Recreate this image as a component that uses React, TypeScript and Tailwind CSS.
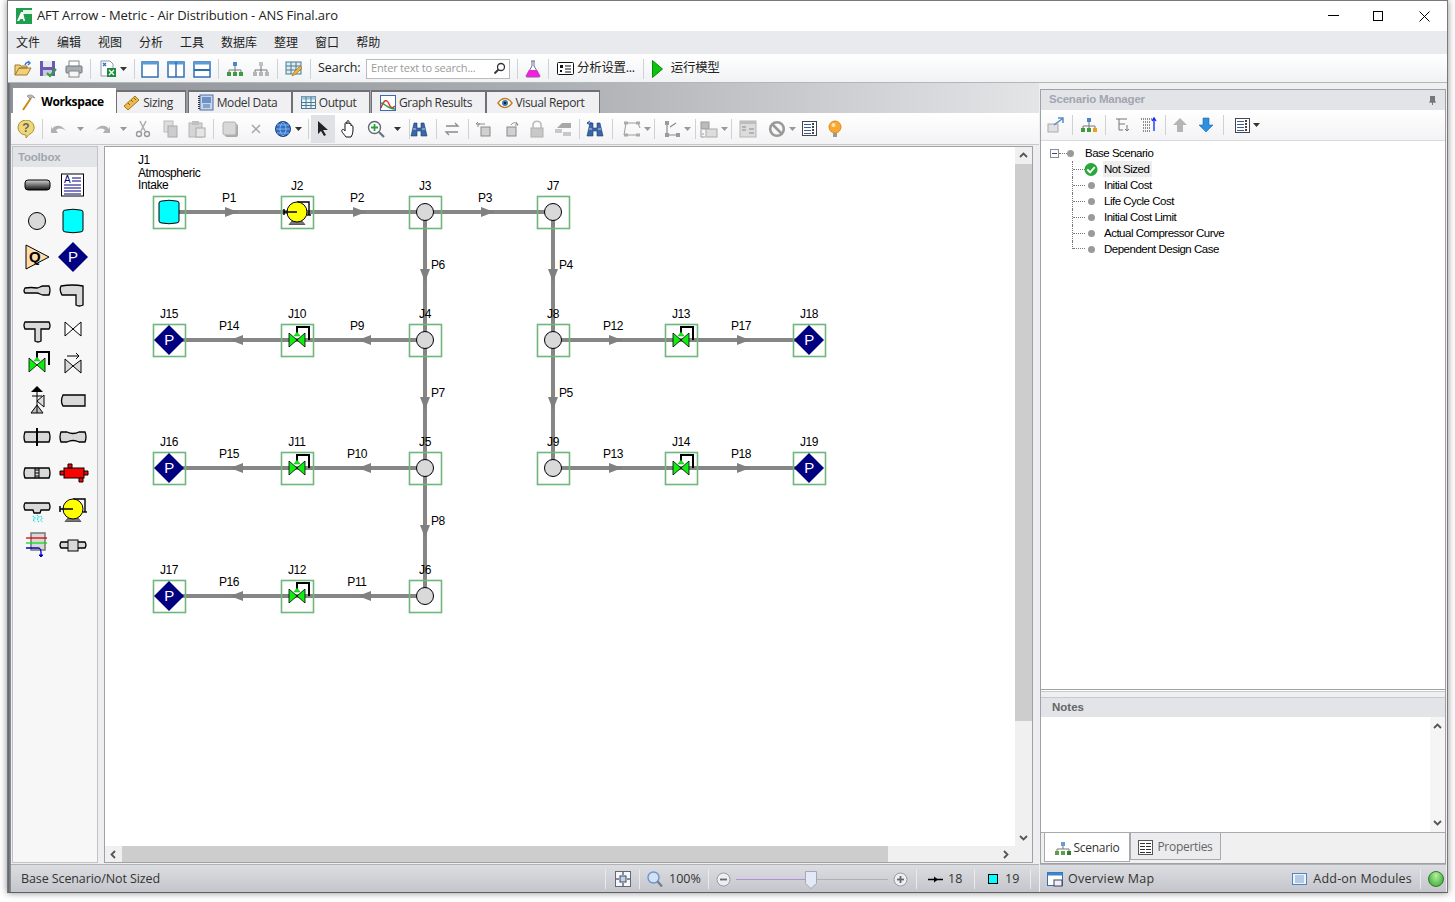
import type { ReactNode } from 'react';

const ui = "font-['Open_Sans','Noto_Sans_CJK_SC',sans-serif]";
const arial = "font-['Liberation_Sans',sans-serif]";

const S = ({ w = 18, h = 18, children }: { w?: number; h?: number; children: ReactNode }) => (
  <svg width={w} height={h} viewBox={`0 0 ${w} ${h}`} className="shrink-0">
    {children}
  </svg>
);

const Sep = ({ c = 'mx-[4px]' }: { c?: string }) => <div className={`w-px h-[20px] bg-[#d0d1d4] shrink-0 ${c}`} />;

const Caret = () => (
  <svg width="7" height="4" viewBox="0 0 7 4" className="shrink-0">
    <path d="M0 0h7L3.5 4z" fill="#333" />
  </svg>
);
const GrayCaret = () => (
  <svg width="7" height="4" viewBox="0 0 7 4" className="shrink-0">
    <path d="M0 0h7L3.5 4z" fill="#999" />
  </svg>
);

const Slot = ({ w, children }: { w: string; children: ReactNode }) => (
  <div className={`${w} h-full flex items-center justify-center gap-[3px] shrink-0`}>{children}</div>
);

/* ---------- small toolbar icons ---------- */
const Layout = ({ kind }: { kind: 'one' | 'cols' | 'rows' }) => (
  <S>
    <rect x="1" y="2" width="16" height="15" fill="#fff" stroke="#2f6fb5" strokeWidth="1.5" />
    <rect x="1" y="2" width="16" height="2.5" fill="#5b9bd8" />
    {kind === 'cols' && <path d="M9 2v15" stroke="#2f6fb5" strokeWidth="1.5" />}
    {kind === 'rows' && <path d="M1 10h16" stroke="#2f6fb5" strokeWidth="2" />}
  </S>
);

const Tree = ({ gray, badge }: { gray?: boolean; badge?: boolean }) => {
  const a = gray ? '#b5b5b5' : '#3f9a3f';
  const b = gray ? '#c0c0c0' : '#4a86c8';
  return (
    <S>
      <rect x="7" y="2" width="4" height="4" fill={b} />
      <path d="M9 6v4M3 12v-2h12v2M9 10v2" stroke="#777" fill="none" />
      <rect x="1" y="12" width="4" height="4" fill={a} />
      <rect x="7" y="12" width="4" height="4" fill={a} />
      <rect x="13" y="12" width="4" height="4" fill={badge ? '#e8a020' : a} />
    </S>
  );
};

const GrayBox = ({ arrow }: { arrow?: 'l' | 'r' }) => (
  <S>
    <rect x="5" y="7" width="9" height="9" fill="#d0d0d0" stroke="#8a8a8a" />
    {arrow === 'l' && <path d="M9 4H2v3M2 2 0 4h4" fill="none" stroke="#8a8a8a" />}
    {arrow === 'r' && <path d="M9 5c2-3 5-3 7 0M14 2l2 3h-3" fill="none" stroke="#8a8a8a" />}
  </S>
);

const Binoculars = ({ small }: { small?: boolean }) => (
  <S>
    <path d="M4 3h3v5h4V3h3l3 13h-6v-5H7v5H1z" fill="#3b66a8" stroke="#1d3c70" strokeWidth=".6" />
    <path d="M3 9h3M12 9h3" stroke="#bcd0ee" />
    {small && <path d="M1 3h5M1 3l3-2M1 3l3 2" stroke="#1d4fa8" fill="none" />}
  </S>
);

const MainToolbar = () => (
  <div className={`h-[29px] pt-[1px] flex items-center pl-[3px] bg-linear-to-b from-white to-[#f1f2f4] border-b border-[#b4b6ba] text-[12.5px] text-[#222] ${ui}`}>
    <Slot w="w-[24px]">
      <S>
        <path d="M1 15V5h5l1 1h6v2H5L1 15h12l4-7H5" fill="#f2cf7a" stroke="#9c7a2a" />
        <path d="M11 5c1-3 3-3 5-2M14 1l2 2-2 2" fill="none" stroke="#3d78c8" strokeWidth="1.4" />
      </S>
    </Slot>
    <Slot w="w-[26px]">
      <S>
        <rect x="1" y="1" width="15" height="15" fill="#6a5bb0" />
        <rect x="4" y="1" width="9" height="6" fill="#e8e8f0" />
        <rect x="4" y="10" width="9" height="6" fill="#c8c8e0" />
        <path d="M8 13l3 3 6-7" fill="none" stroke="#2e9e3a" strokeWidth="2" />
      </S>
    </Slot>
    <Slot w="w-[26px]">
      <S>
        <rect x="4" y="1" width="10" height="6" fill="#fff" stroke="#888" />
        <rect x="1" y="6" width="16" height="7" rx="1" fill="#a9adb5" stroke="#6f737a" />
        <rect x="4" y="11" width="10" height="6" fill="#f5f5f5" stroke="#888" />
      </S>
    </Slot>
    <Sep c="mx-[3px]" />
    <Slot w="w-[38px]">
      <S>
        <path d="M2 1h9l3 3v12H2z" fill="#fff" stroke="#8a9ab0" />
        <path d="M4 3l3 3M7 3 4 6" stroke="#2d6fc0" strokeWidth="1.3" />
        <rect x="8" y="8" width="9" height="9" fill="#1f8a3f" />
        <path d="M10 10l5 5M15 10l-5 5" stroke="#fff" strokeWidth="1.3" />
      </S>
      <Caret />
    </Slot>
    <Sep c="mx-[2px]" />
    <Slot w="w-[26px]"><Layout kind="one" /></Slot>
    <Slot w="w-[26px]"><Layout kind="cols" /></Slot>
    <Slot w="w-[26px]"><Layout kind="rows" /></Slot>
    <Sep c="mx-[3px]" />
    <Slot w="w-[26px]"><Tree /></Slot>
    <Slot w="w-[26px]"><Tree gray /></Slot>
    <Sep c="mx-[3px]" />
    <Slot w="w-[26px]">
      <S>
        <rect x="1" y="2" width="15" height="12" fill="#dfeaf2" stroke="#4a7a90" />
        <path d="M1 6h15M1 10h15M6 2v12M11 2v12" stroke="#4a7a90" />
        <path d="M7 16l2-4 6-6 2 2-6 6z" fill="#f0b040" stroke="#a06a10" strokeWidth=".6" />
      </S>
    </Slot>
    <Sep c="mx-[3px]" />
    <span className="ml-[4px] w-[43px] whitespace-nowrap text-[#222] tracking-[-0.05px]">Search:</span>
    <div className="ml-[5px] w-[144px] h-[20px] bg-white border border-[#b9bbc0] flex items-center pl-[4px] pr-[3px] justify-between text-[11px] tracking-[-0.2px] text-[#9a9a9a]">
      <span>Enter text to search...</span>
      <svg width="13" height="13" viewBox="0 0 13 13">
        <circle cx="8" cy="5" r="3.5" fill="none" stroke="#333" strokeWidth="1.3" />
        <path d="M5.5 7.5 1.5 11.5" stroke="#333" strokeWidth="1.8" />
      </svg>
    </div>
    <Sep c="ml-[7px] mr-[4px]" />
    <Slot w="w-[22px]">
      <S>
        <path d="M7 1h4M8 1v5l-6 10a1 1 0 0 0 1 1h12a1 1 0 0 0 1-1L10 6V1" fill="#fff" stroke="#6a6f90" />
        <path d="M5 10h8l3 6a1 1 0 0 1-1 1H3a1 1 0 0 1-1-1z" fill="#ee22dd" />
      </S>
    </Slot>
    <Sep c="ml-[4px] mr-[7px]" />
    <Slot w="w-[18px]">
      <S w={17} h={13}>
        <rect x=".5" y=".5" width="16" height="12" rx="1" fill="#fff" stroke="#111" />
        <rect x="3" y="3" width="3" height="3" fill="#111" />
        <rect x="3" y="8" width="2" height="2" fill="#111" />
        <path d="M8 4h6M8 7h6M8 10h6" stroke="#111" />
      </S>
    </Slot>
    <span className="ml-[3px] tracking-[-0.3px]">分析设置...</span>
    <Sep c="ml-[8px] mr-[6px]" />
    <Slot w="w-[16px]">
      <svg width="11" height="18" viewBox="0 0 11 18">
        <path d="M.5.5 10.5 9 .5 17.5z" fill="#0cc40c" stroke="#0a8a0a" />
      </svg>
    </Slot>
    <span className="ml-[5px] tracking-[-0.3px]">运行模型</span>
    <div className="flex-1" />
  </div>
);

/* ---------- workspace tabs ---------- */
const TabIcon = ({ name }: { name: string }) => {
  if (name === 'Workspace')
    return (
      <S>
        <path d="M3 17 11 5" stroke="#c98a1c" strokeWidth="2" />
        <path d="M7 3c3-2 6-1 8 2l-3-1-2 2z" fill="#b9b9b9" stroke="#777" strokeWidth=".6" />
      </S>
    );
  if (name === 'Sizing')
    return (
      <S w={16} h={16}>
        <path d="M0 11 11 1l4 4L4 15z" fill="#e8bb4c" stroke="#a47a18" />
        <path d="M4 8l2 2M7 5l2 2M10 3l2 2" stroke="#8a6410" />
      </S>
    );
  if (name === 'Model Data')
    return (
      <S w={16} h={17}>
        <rect x="2" y="1" width="13" height="15" fill="#c6d6ec" stroke="#4e6fa5" />
        <rect x="4" y="3" width="9" height="6" fill="#6f8fc8" />
        <path d="M5 11h7M5 13h7" stroke="#4e6fa5" />
        <path d="M1 2v13" stroke="#333" strokeDasharray="1 1" strokeWidth="2" />
      </S>
    );
  if (name === 'Output')
    return (
      <S w={15} h={13}>
        <rect x=".5" y=".5" width="14" height="12" fill="#eaf3f8" stroke="#4a7a90" />
        <rect x=".5" y=".5" width="14" height="3" fill="#9dc0d4" />
        <path d="M1 6.500h13M1 9.500h13M5 1v11M10 1v11" stroke="#4a7a90" />
      </S>
    );
  if (name === 'Graph Results')
    return (
      <S w={16} h={16}>
        <rect x=".5" y=".5" width="15" height="15" fill="#fff" stroke="#3a6bb0" />
        <path d="M1 13c3-9 6-9 8-4s4 4 6 2" fill="none" stroke="#e03030" strokeWidth="1.4" />
        <path d="M1 8c4 0 6 6 14 6" fill="none" stroke="#30a040" strokeWidth="1.4" />
      </S>
    );
  return (
    <S w={16} h={12}>
      <path d="M1 6c4-6 10-6 14 0-4 6-10 6-14 0z" fill="#fff" stroke="#c08020" strokeWidth="1.4" />
      <circle cx="8" cy="6" r="3" fill="#3a7ab8" />
      <circle cx="8" cy="6" r="1.2" fill="#123" />
    </S>
  );
};

const tabs = [
  { label: 'Workspace', w: 'w-[103px]', c: 'ml-0' },
  { label: 'Sizing', w: 'w-[70px]', c: 'ml-0' },
  { label: 'Model Data', w: 'w-[104px]', c: 'ml-[2px]' },
  { label: 'Output', w: 'w-[78px]', c: 'ml-0' },
  { label: 'Graph Results', w: 'w-[115px]', c: 'ml-[1px]' },
  { label: 'Visual Report', w: 'w-[114px]', c: 'ml-0' },
];

const Tabs = () => (
  <div className={`h-[30px] pt-[6px] flex items-end pl-[2px] bg-linear-to-r from-[#8f9397] via-[#a9acb0] to-[#e4e5e7] text-[12px] ${ui}`}>
    {tabs.map((t, i) => (
      <div
        key={t.label}
        className={`${t.w} ${t.c} flex items-center justify-center gap-[3px] pr-[5px] border-t-2 border-x ${
          i === 0
            ? 'h-[25px] bg-white border-white font-bold text-black'
            : 'h-[23px] bg-[#f0f0f2] border-[#6e7073] text-[#333]'
        }`}
      >
        <TabIcon name={t.label} />
        <span className="tracking-[-0.4px]">{t.label}</span>
      </div>
    ))}
  </div>
);

/* ---------- workspace toolbar ---------- */
const WorkToolbar = () => (
  <div className="h-[32px] flex items-center pl-[3px] bg-linear-to-b from-white to-[#f3f3f5] border-b border-[#c8c9cc]">
    <Slot w="w-[24px]">
      <S>
        <path d="M9 0a8 7.500 0 0 1 3 14.500L9 18v-3A8 7.500 0 0 1 9 0z" fill="#f0d878" stroke="#a89030" />
        <text x="9" y="12" textAnchor="middle" fontSize="12" fontWeight="700" fill="#666" fontFamily="Liberation Sans">?</text>
      </S>
    </Slot>
    <Sep />
    <Slot w="w-[24px]">
      <S>
        <path d="M2 9c4-5 10-4 14 2-4-3-7-3-10-1l2 3H1V6z" fill="#b0b0b0" />
      </S>
    </Slot>
    <Slot w="w-[18px]"><GrayCaret /></Slot>
    <Slot w="w-[26px]">
      <S>
        <path d="M16 9C12 4 6 5 2 11c4-3 7-3 10-1l-2 3h7V6z" fill="#b0b0b0" />
      </S>
    </Slot>
    <Slot w="w-[16px]"><GrayCaret /></Slot>
    <Slot w="w-[24px]">
      <S>
        <path d="M6 1l5 10M12 1 7 11" stroke="#b0b0b0" strokeWidth="1.6" />
        <circle cx="5" cy="14" r="2.500" fill="none" stroke="#999" strokeWidth="1.4" />
        <circle cx="13" cy="14" r="2.500" fill="none" stroke="#999" strokeWidth="1.4" />
      </S>
    </Slot>
    <Slot w="w-[30px]">
      <S>
        <rect x="3" y="1" width="9" height="11" fill="#ddd" stroke="#bbb" />
        <rect x="7" y="6" width="9" height="11" fill="#ccc" stroke="#aaa" />
      </S>
    </Slot>
    <Slot w="w-[24px]">
      <S>
        <rect x="1" y="3" width="13" height="14" fill="#d5d5d5" stroke="#b5b5b5" />
        <rect x="4" y="1" width="7" height="4" fill="#c0c0c0" />
        <rect x="8" y="8" width="9" height="9" fill="#e5e5e5" stroke="#aaa" />
      </S>
    </Slot>
    <Sep />
    <Slot w="w-[24px]">
      <S>
        <rect x="4" y="4" width="13" height="13" rx="2" fill="#aaa" />
        <rect x="2" y="2" width="13" height="13" rx="2" fill="#d8d8d8" stroke="#b0b0b0" />
      </S>
    </Slot>
    <Slot w="w-[28px]">
      <S>
        <path d="M5 5l8 8M13 5l-8 8" stroke="#a5a5a5" strokeWidth="1.500" />
      </S>
    </Slot>
    <Slot w="w-[36px]">
      <S>
        <circle cx="9" cy="9" r="7.500" fill="#2f6fc4" stroke="#1c3f80" />
        <path d="M2 9h14M9 2c-4 4-4 10 0 14M9 2c4 4 4 10 0 14M3 5h12M3 13h12" stroke="#a8c8ee" strokeWidth=".7" fill="none" />
      </S>
      <Caret />
    </Slot>
    <Sep c="mx-[2px]" />
    <div className="w-[24px] h-[28px] flex items-center justify-center bg-[#e0e1e5] shrink-0">
      <S w={12} h={17}>
        <path d="M1 1v13l3-3 3 5 2-1-3-5h5z" fill="#222" />
      </S>
    </div>
    <Slot w="w-[28px]">
      <S>
        <path d="M6 17c-2-3-5-5-4-7s3 1 3 1V4c0-2 2-2 2 0V2c0-2 2-2 2 0v2c0-1 2-1 2 0v2c0-1 2-1 2 1 0 4 0 7-2 10z" fill="#fff" stroke="#111" />
      </S>
    </Slot>
    <Slot w="w-[26px]">
      <S>
        <circle cx="7.500" cy="7.500" r="6" fill="#fff" stroke="#5f6a75" strokeWidth="1.4" />
        <path d="M4 7.500h7M7.500 4v7" stroke="#2f9e3a" strokeWidth="1.800" />
        <path d="M12 12l5 5" stroke="#6a7380" strokeWidth="2.200" />
      </S>
    </Slot>
    <Slot w="w-[16px]"><Caret /></Slot>
    <Sep c="ml-[4px]" />
    <Slot w="w-[18px]"><Binoculars /></Slot>
    <Sep c="ml-[8px] mr-[6px]" />
    <Slot w="w-[18px]">
      <S>
        <path d="M3 6h12l-3-3M15 12H3l3 3" fill="none" stroke="#8a8a8a" strokeWidth="1.300" />
      </S>
    </Slot>
    <Sep c="ml-[7px] mr-[3px]" />
    <Slot w="w-[26px]"><GrayBox arrow="l" /></Slot>
    <Slot w="w-[26px]"><GrayBox arrow="r" /></Slot>
    <Slot w="w-[26px]">
      <S>
        <path d="M5 8V5c0-5 8-5 8 0v3" fill="none" stroke="#bcbcbc" strokeWidth="1.600" />
        <rect x="3" y="8" width="12" height="9" fill="#c8c8c8" stroke="#b0b0b0" />
      </S>
    </Slot>
    <Slot w="w-[26px]">
      <S>
        <path d="M3 8l5-5h9v5z" fill="#a8a8a8" />
        <rect x="1" y="9" width="7" height="4" fill="#c8c8c8" />
        <rect x="9" y="12" width="8" height="4" fill="#c8c8c8" />
      </S>
    </Slot>
    <Sep c="ml-[3px] mr-[5px]" />
    <Slot w="w-[20px]"><Binoculars small /></Slot>
    <Sep c="ml-[7px] mr-[7px]" />
    <Slot w="w-[34px]">
      <S>
        <path d="M3 3h12M3 15h12M3 3 1 15M15 3l2 5" fill="none" stroke="#9c9c9c" />
        <rect x="1" y="1.500" width="4" height="3" fill="#aaa" />
        <rect x="13" y="1.500" width="4" height="3" fill="#aaa" />
        <rect x="1" y="13.500" width="4" height="3" fill="#aaa" />
        <rect x="13" y="13.500" width="4" height="3" fill="#aaa" />
      </S>
      <GrayCaret />
    </Slot>
    <Sep c="mr-[7px]" />
    <Slot w="w-[30px]">
      <S>
        <path d="M4 3v12h12M7 7l6-4" fill="none" stroke="#8a8a8a" strokeWidth="1.200" />
        <rect x="2" y="13" width="4" height="4" fill="#9a9a9a" />
        <rect x="13" y="13" width="4" height="4" fill="#9a9a9a" />
        <rect x="2" y="1" width="4" height="4" fill="#9a9a9a" />
      </S>
      <GrayCaret />
    </Slot>
    <Sep c="mx-[3px]" />
    <Slot w="w-[30px]">
      <S>
        <rect x="1" y="2" width="8" height="7" fill="#bbb" stroke="#999" />
        <rect x="6" y="9" width="11" height="8" fill="#ddd" stroke="#aaa" />
        <path d="M1 10v7h4M2 14h2" stroke="#999" fill="none" />
      </S>
      <GrayCaret />
    </Slot>
    <Sep c="ml-[2px] mr-[4px]" />
    <Slot w="w-[24px]">
      <S>
        <rect x="1" y="1" width="16" height="16" fill="#dcdcdc" stroke="#b5b5b5" />
        <rect x="1" y="1" width="16" height="3" fill="#bdbdbd" />
        <path d="M3 7h4M3 10h4M10 9h5M10 13h5" stroke="#a5a5a5" strokeWidth="1.500" />
      </S>
    </Slot>
    <div className="w-[8px] shrink-0" />
    <Slot w="w-[28px]">
      <S>
        <circle cx="9" cy="9" r="6.800" fill="none" stroke="#999" strokeWidth="2.600" />
        <path d="M4.500 4.500l9 9" stroke="#999" strokeWidth="2.600" />
      </S>
      <GrayCaret />
    </Slot>
    <Slot w="w-[26px]">
      <S w={15} h={15}>
        <rect x=".5" y=".5" width="14" height="14" fill="#fff" stroke="#445" />
        <path d="M2 3.500h7M2 6.500h7M2 9.500h7M2 12.500h7" stroke="#3a5a90" />
        <path d="M11 2v11" stroke="#444" strokeWidth="2" strokeDasharray="2 1" />
      </S>
    </Slot>
    <Slot w="w-[26px]">
      <S>
        <circle cx="9" cy="7" r="6" fill="#f8a830" stroke="#e08a10" />
        <circle cx="7.500" cy="5" r="2" fill="#ffe6b0" />
        <rect x="7" y="13" width="4" height="4" fill="#999" />
      </S>
    </Slot>
  </div>
);

/* ---------- toolbox ---------- */
const fit = '#d9d9d9';
const Cell = ({ children }: { children: ReactNode }) => (
  <svg width="36" height="36" viewBox="0 0 36 36">
    {children}
  </svg>
);

const PipeEnd = ({ d }: { d: string }) => <path d={d} fill={fit} stroke="#000" strokeWidth="1.300" />;

const Valve = ({ x = 18, y = 18 }: { x?: number; y?: number }) => (
  <g transform={`translate(${x} ${y})`}>
    <path d="M0 -7V-13H12V0" fill="none" stroke="#000" strokeWidth="2" />
    <path d="M-8 -7 8 7V-7L-8 7z" fill="#10ee10" stroke="#000" strokeWidth=".8" />
    <path d="M-3 -4H3L0 -8z" fill="#10ee10" stroke="#0a0" strokeWidth=".5" />
  </g>
);

const Compressor = ({ x = 18, y = 18 }: { x?: number; y?: number }) => (
  <g transform={`translate(${x} ${y})`}>
    <path d="M-8 12.500-4 8H4L8 12.500z" fill="#777" stroke="#333" strokeWidth=".7" />
    <path d="M0 -10H12V3" fill="none" stroke="#000" strokeWidth="1.400" />
    <path d="M10 3h4" stroke="#000" strokeWidth="1.400" />
    <circle r="10" fill="#ffff00" stroke="#000" strokeWidth="1" />
    <path d="M0 0H-13M-13 -3V3" fill="none" stroke="#000" strokeWidth="1.500" />
  </g>
);

const Diamond = ({ x = 18, y = 18 }: { x?: number; y?: number }) => (
  <g transform={`translate(${x} ${y})`}>
    <path d="M0 -15 15 0 0 15 -15 0z" fill="#000080" />
    <text y="5" textAnchor="middle" fontSize="15" fill="#fff" fontFamily="Liberation Sans">P</text>
  </g>
);

const Tank = ({ x = 18, y = 18 }: { x?: number; y?: number }) => (
  <path
    transform={`translate(${x} ${y})`}
    d="M-10 -9Q-10 -11 -7 -11Q0 -12.500 7 -11Q10 -11 10 -9V9Q10 11 7 11Q0 12.500 -7 11Q-10 11 -10 9z"
    fill="#00ffff"
    stroke="#000"
  />
);

const toolboxIcons: ReactNode[] = [
  <>
    <defs>
      <linearGradient id="pipeG" x1="0" y1="0" x2="0" y2="1">
        <stop offset="0" stopColor="#d5d5d5" />
        <stop offset="1" stopColor="#111" />
      </linearGradient>
    </defs>
    <rect x="6" y="13" width="25" height="10" rx="3" fill="url(#pipeG)" stroke="#000" />
  </>,
  <>
    <rect x="6.500" y="7" width="22" height="22" fill="#fff" stroke="#000" />
    <text x="9" y="16" fontSize="10" fill="#000080" fontFamily="Liberation Sans">A</text>
    <path d="M17 11h9M17 14h9M9 18h17M9 21h17M9 24h17M9 27h17" stroke="#000080" />
  </>,
  <circle cx="18" cy="18" r="8.500" fill={fit} stroke="#000" />,
  <Tank />,
  <>
    <path d="M7 6 30 18 7 30z" fill="#ffdcaa" stroke="#000" />
    <text x="10" y="23" fontSize="15" fontWeight="700" fontFamily="Liberation Sans" fill="#000">Q</text>
  </>,
  <Diamond />,
  <PipeEnd d="M6 13q6-1 12 0c2 0 4-2 6-2h6q2 4 0 9h-6c-2 0-4-2-6-2H6q-2-2 0-5z" />,
  <PipeEnd d="M6 11q12-2 22 0v19q-4 2-7 0V20H7q-3-5-1-9z" />,
  <PipeEnd d="M6 11h24q2 4 0 7H22v12q-3 2-6 0V18H6q-2-4 0-7z" />,
  <path d="M10 11v14l8-7-8-7zm16 0v14l-8-7z" fill="#fff" stroke="#000" />,
  <Valve />,
  <>
    <path d="M10 13v13l8-7-8-7zm16 0v13l-8-7z" fill={fit} stroke="#000" />
    <path d="M12 9h12M21 6l3 3-3 3" fill="none" stroke="#000" />
  </>,
  <>
    <path d="M18 6v24M12 30h12L18 22z" fill="#bbb" stroke="#000" />
    <path d="M12 9 18 3l6 6z" fill="#000" />
    <path d="M25 12v12l-7-6z" fill="#ddd" stroke="#000" />
    <path d="M13 13h10" stroke="#000" />
  </>,
  <PipeEnd d="M8 12h22v11H8q-3-5 0-11z" />,
  <>
    <PipeEnd d="M6 13h24q2 5 0 10H6q-2-5 0-10z" />
    <path d="M18 9v18" stroke="#000" strokeWidth="2" />
  </>,
  <PipeEnd d="M6 13h6q6 3 12 0h6q2 5 0 10h-6q-6-3-12 0H6q-2-5 0-10z" />,
  <>
    <PipeEnd d="M6 13h24q2 5 0 10H6q-2-5 0-10z" />
    <path d="M16 13v10M20 13v10M16 15h4M16 18h4M16 21h4" stroke="#000" />
  </>,
  <>
    <rect x="9" y="13" width="20" height="10" fill="#ff0000" stroke="#000" />
    <path d="M5 16h4v4H5zM29 16h4v4h-4zM13 9h4v4h-4zM24 23h4v4h-4z" fill="#ff0000" stroke="#000" />
  </>,
  <>
    <PipeEnd d="M6 12h24q2 4 0 7H22l-1 3h-6l-1-3H6q-2-4 0-7z" />
    <path d="M14 25l2 2-2 2 2 2M18 24l2 2-2 2 2 3M22 25l1 2-1 2 1 2" fill="none" stroke="#00dede" strokeWidth="1.300" strokeDasharray="1 1" />
  </>,
  <Compressor />,
  <>
    <rect x="12" y="6" width="14" height="17" fill="#d8d8d8" stroke="#777" strokeWidth="1.500" />
    <path d="M7 11h21" stroke="#e00000" strokeWidth="1.300" />
    <path d="M7 16h21" stroke="#10e010" strokeWidth="1.300" />
    <path d="M7 21h13q2 1 2 4v3" fill="none" stroke="#0000c0" strokeWidth="1.300" />
    <path d="M20 28h4l-2 2z" fill="#0000c0" stroke="#0000c0" />
  </>,
  <>
    <PipeEnd d="M6 15h24q2 3 0 6H6q-2-3 0-6z" />
    <rect x="13" y="13" width="10" height="11" fill={fit} stroke="#000" />
  </>,
];

const Toolbox = () => (
  <div className="w-[86px] shrink-0 border border-[#c2c3c6] bg-[#f7f7f8] flex flex-col">
    <div className={`h-[20px] bg-[#e3e4e8] text-[11.5px] font-bold text-[#a2a5b0] pl-[5px] leading-[20px] ${arial} tracking-[-0.2px]`}>Toolbox</div>
    <div className="grid grid-cols-[36px_36px] auto-rows-[36px] pl-[6px]">
      {toolboxIcons.map((icon, i) => (
        <Cell key={i}>{icon}</Cell>
      ))}
    </div>
  </div>
);

/* ---------- diagram ---------- */
const OX = 105;
const OY = 147;

type Kind = 'tank' | 'comp' | 'circle' | 'valve' | 'p';
const nodes: [string, number, number, Kind][] = [
  ['J1', 169, 212, 'tank'],
  ['J2', 297, 212, 'comp'],
  ['J3', 425, 212, 'circle'],
  ['J7', 553, 212, 'circle'],
  ['J15', 169, 340, 'p'],
  ['J10', 297, 340, 'valve'],
  ['J4', 425, 340, 'circle'],
  ['J8', 553, 340, 'circle'],
  ['J13', 681, 340, 'valve'],
  ['J18', 809, 340, 'p'],
  ['J16', 169, 468, 'p'],
  ['J11', 297, 468, 'valve'],
  ['J5', 425, 468, 'circle'],
  ['J9', 553, 468, 'circle'],
  ['J14', 681, 468, 'valve'],
  ['J19', 809, 468, 'p'],
  ['J17', 169, 596, 'p'],
  ['J12', 297, 596, 'valve'],
  ['J6', 425, 596, 'circle'],
];

const pipes: [string, number, number, number, number][] = [
  ['P1', 169, 212, 297, 212],
  ['P2', 297, 212, 425, 212],
  ['P3', 425, 212, 553, 212],
  ['P6', 425, 212, 425, 340],
  ['P4', 553, 212, 553, 340],
  ['P7', 425, 340, 425, 468],
  ['P5', 553, 340, 553, 468],
  ['P8', 425, 468, 425, 596],
  ['P9', 425, 340, 297, 340],
  ['P14', 297, 340, 169, 340],
  ['P12', 553, 340, 681, 340],
  ['P17', 681, 340, 809, 340],
  ['P10', 425, 468, 297, 468],
  ['P15', 297, 468, 169, 468],
  ['P13', 553, 468, 681, 468],
  ['P18', 681, 468, 809, 468],
  ['P11', 425, 596, 297, 596],
  ['P16', 297, 596, 169, 596],
];

const Arrow = ({ p }: { p: [string, number, number, number, number] }) => {
  const [, x1, y1, x2, y2] = p;
  if (y1 === y2) {
    const s = x2 > x1 ? 1 : -1;
    const t = s > 0 ? x1 + 69 : x1 - 67;
    return <path d={`M${t - OX} ${y1 - OY}l${-13 * s} -5v10z`} fill="#808080" />;
  }
  return <path d={`M${x1 - OX} ${y1 + 70 - OY}l-5 -13h10z`} fill="#808080" />;
};

const Symbol = ({ n }: { n: [string, number, number, Kind] }) => {
  const [, cx, cy, k] = n;
  const x = cx - OX;
  const y = cy - OY;
  return (
    <g>
      <rect x={x - 15.500} y={y - 15.500} width="32" height="32" fill="none" stroke="#6fb67c" strokeWidth="1.600" />
      {k === 'tank' && <Tank x={x} y={y} />}
      {k === 'comp' && <Compressor x={x} y={y} />}
      {k === 'circle' && <circle cx={x} cy={y} r="8.500" fill="#d9d9d9" stroke="#000" />}
      {k === 'valve' && <Valve x={x} y={y} />}
      {k === 'p' && <Diamond x={x} y={y} />}
    </g>
  );
};

const Canvas = () => (
  <div className={`flex-1 relative bg-white overflow-hidden text-[12px] leading-[13px] text-black tracking-[-0.4px] ${arial}`}>
    <svg width="910" height="697" className="absolute left-0 top-0">
      {pipes.map(p => (
        <line key={p[0]} x1={p[1] - OX} y1={p[2] - OY} x2={p[3] - OX} y2={p[4] - OY} stroke="#868686" strokeWidth="4" />
      ))}
      {pipes.map(p => (
        <Arrow key={p[0]} p={p} />
      ))}
      {nodes.map(n => (
        <Symbol key={n[0]} n={n} />
      ))}
    </svg>
    {nodes
      .filter(n => n[0] !== 'J1')
      .map(n => (
        <span
          key={n[0]}
          className="absolute -translate-x-1/2"
          style={{ left: n[1] - OX, top: n[2] - OY - 32 }}
        >
          {n[0]}
        </span>
      ))}
    <div className="absolute left-[33px] top-[7px] leading-[12.500px]">
      J1
      <br />
      Atmospheric
      <br />
      Intake
    </div>
    {pipes.map(p => {
      const vertical = p[1] === p[3];
      const mx = (p[1] + p[3]) / 2;
      const my = (p[2] + p[4]) / 2;
      return (
        <span
          key={p[0]}
          className={vertical ? 'absolute' : 'absolute -translate-x-1/2'}
          style={
            vertical
              ? { left: p[1] + 6 - OX, top: my - 17 - OY }
              : { left: mx - 4 - OX, top: p[2] - 20 - OY }
          }
        >
          {p[0]}
        </span>
      );
    })}
  </div>
);

const ScrollArrow = ({ d }: { d: string }) => (
  <svg width="9" height="9" viewBox="0 0 9 9" className="shrink-0">
    <path d={d} fill="none" stroke="#555" strokeWidth="1.800" />
  </svg>
);

const Diagram = () => (
  <div className="flex-1 border border-[#9fa1a5] flex flex-col min-w-0 bg-[#f0f0f0]">
    <div className="flex-1 flex min-h-0">
      <Canvas />
      <div className="w-[17px] bg-[#f0f0f0] flex flex-col items-center">
        <div className="h-[17px] flex items-center justify-center">
          <ScrollArrow d="M1 6 4.500 2.500 8 6" />
        </div>
        <div className="w-full h-[557px] bg-[#cdcdcd]" />
        <div className="flex-1" />
        <div className="h-[17px] flex items-center justify-center">
          <ScrollArrow d="M1 3 4.500 6.500 8 3" />
        </div>
      </div>
    </div>
    <div className="h-[16px] flex items-center bg-[#f0f0f0]">
      <div className="w-[17px] flex justify-center">
        <ScrollArrow d="M6 1 2.500 4.500 6 8" />
      </div>
      <div className="w-[766px] h-full bg-[#cdcdcd]" />
      <div className="flex-1" />
      <div className="w-[17px] mr-[18px] flex justify-center">
        <ScrollArrow d="M3 1 6.500 4.500 3 8" />
      </div>
    </div>
  </div>
);

/* ---------- status bars ---------- */
const StatusSep = () => <div className="w-px h-[20px] bg-[#e9eaec] shrink-0" />;

const ZoomBtn = ({ plus }: { plus?: boolean }) => (
  <svg width="15" height="15" viewBox="0 0 15 15" className="shrink-0">
    <circle cx="7.500" cy="7.500" r="6.500" fill="#eeeef2" stroke="#9a9ca3" />
    <path d="M4 7.500h7" stroke="#666" strokeWidth="1.800" />
    {plus && <path d="M7.500 4v7" stroke="#666" strokeWidth="1.800" />}
  </svg>
);

const LeftStatus = () => (
  <div className={`h-[28px] pt-px flex items-center bg-linear-to-b from-[#dcdde1] to-[#c4c6cc] border-t border-[#b0b2b6] text-[12.5px] text-[#333] ${ui}`}>
    <span className="pl-[10px] w-[594px] tracking-[-0.1px]">Base Scenario/Not Sized</span>
    <StatusSep />
    <div className="w-[33px] flex justify-center">
      <svg width="16" height="16" viewBox="0 0 16 16">
        <rect x=".5" y=".5" width="15" height="15" fill="#f4f7fa" stroke="#667" />
        <rect x="5" y="5" width="6" height="6" fill="#bcd4f0" stroke="#445" />
        <path d="M8 1v3M8 12v3M1 8h3M12 8h3" stroke="#222" />
      </svg>
    </div>
    <StatusSep />
    <div className="w-[68px] flex items-center pl-[7px] gap-[6px]">
      <svg width="16" height="17" viewBox="0 0 16 17" className="shrink-0">
        <circle cx="6.500" cy="6.500" r="5.500" fill="#cfe2f8" stroke="#6f94c8" strokeWidth="1.400" />
        <path d="M10.500 10.500 15 15.500" stroke="#7a7f88" strokeWidth="2.400" />
      </svg>
      <span>100%</span>
    </div>
    <StatusSep />
    <div className="w-[207px] flex items-center pl-[7px] gap-[5px]">
      <ZoomBtn />
      <div className="relative w-[152px] h-px bg-[#aeb0b6]">
        <div className="absolute left-0 top-0 w-[72px] h-px bg-[#b090d8]" />
        <svg width="12" height="18" viewBox="0 0 12 18" className="absolute left-[69px] -top-[8px]">
          <path d="M.5.500h11v12l-5.500 5-5.500-5z" fill="#e4e9f8" stroke="#a5a8b0" />
        </svg>
      </div>
      <ZoomBtn plus />
    </div>
    <StatusSep />
    <div className="w-[57px] flex items-center pl-[11px] gap-[5px]">
      <svg width="15" height="7" viewBox="0 0 15 7" className="shrink-0">
        <path d="M0 3.500h15" stroke="#000" strokeWidth="1.500" />
        <path d="M6 .5 10 3.500 6 6.500z" fill="#000" />
      </svg>
      <span>18</span>
    </div>
    <StatusSep />
    <div className="w-[55px] flex items-center pl-[13px] gap-[7px]">
      <span className="w-[10px] h-[10px] bg-[#00ffff] border border-black" />
      <span>19</span>
    </div>
    <StatusSep />
  </div>
);

const RightStatus = () => (
  <div className={`h-[28px] pt-px flex items-center bg-linear-to-b from-[#dcdde1] to-[#c4c6cc] border-t border-[#b0b2b6] text-[12.5px] text-[#333] ${ui}`}>
    <div className="flex items-center pl-[7px] gap-[5px]">
      <svg width="16" height="16" viewBox="0 0 16 16">
        <rect x=".5" y="1.500" width="15" height="13" fill="#fff" stroke="#2f6fb5" />
        <rect x=".5" y="1.500" width="15" height="3" fill="#3f86cf" />
        <rect x="7" y="9" width="8" height="6" fill="#eef" stroke="#445" />
      </svg>
      <span className="tracking-[0.25px]">Overview Map</span>
    </div>
    <div className="flex-1" />
    <svg width="15" height="12" viewBox="0 0 15 12" className="shrink-0">
      <rect x=".5" y=".5" width="14" height="11" fill="#eef4fb" stroke="#4f86c0" />
      <path d="M3 3h9M3 5h9M3 7h9M3 9h9" stroke="#7aa2cf" />
    </svg>
    <span className="ml-[6px] tracking-[0.2px]">Add-on Modules</span>
    <div className="w-px h-[20px] bg-[#e9eaec] ml-[8px]" />
    <div className="w-[16px] h-[16px] rounded-full ml-[7px] mr-[2px] border border-[#2d7a2d] bg-radial-[at_50%_25%] from-[#b8f0a0] to-[#28a028]" />
  </div>
);

/* ---------- scenario manager ---------- */
const scenarios = ['Not Sized', 'Initial Cost', 'Life Cycle Cost', 'Initial Cost Limit', 'Actual Compressor Curve', 'Dependent Design Case'];

const ScenarioTree = () => (
  <div className={`flex-1 bg-white pt-[4px] pl-[9px] text-[11.5px] leading-[16px] text-black tracking-[-0.5px] ${arial}`}>
    <div className="h-[16px] flex items-center">
      <div className="w-[9px] h-[9px] border border-[#8a8c92] flex items-center justify-center shrink-0">
        <div className="w-[5px] h-px bg-[#2a4a90]" />
      </div>
      <div className="w-[8px] border-t border-dotted border-[#777]" />
      <span className="w-[7px] h-[7px] rounded-full bg-[#9a9a9a]" />
      <span className="ml-[11px]">Base Scenario</span>
    </div>
    {scenarios.map((s, i) => (
      <div key={s} className="h-[16px] flex items-center pl-[22px]">
        <div className={`w-[12px] border-l border-dotted border-[#777] shrink-0 relative ${i === 5 ? 'h-[8px] self-start' : 'h-full'}`}>
          <div className={`absolute left-0 w-[12px] border-t border-dotted border-[#777] ${i === 5 ? 'bottom-0' : 'top-[8px]'}`} />
        </div>
        <div className="w-[14px] flex justify-center shrink-0">
          {i === 0 ? (
            <svg width="15" height="15" viewBox="0 0 15 15">
              <circle cx="7.500" cy="7.500" r="7" fill="#28a838" />
              <path d="M3.500 7.500 6.500 10.500 11.500 5" fill="none" stroke="#fff" strokeWidth="2" />
            </svg>
          ) : (
            <span className="w-[7px] h-[7px] rounded-full bg-[#9a9a9a]" />
          )}
        </div>
        <span className={`ml-[5px] px-[1px] ${i === 0 ? 'bg-[#eeeeee] pr-[3px]' : ''}`}>{s}</span>
      </div>
    ))}
  </div>
);

const RightPanel = () => (
  <div className="w-[406px] shrink-0 flex flex-col">
    <div className="flex-1 border border-[#9fa1a5] flex flex-col min-h-0 bg-white">
      <div className={`h-[20px] bg-[#e3e4e8] flex items-center justify-between pl-[8px] pr-[9px] text-[11.5px] font-bold text-[#a2a5b0] tracking-[-0.2px] ${arial}`}>
        <span>Scenario Manager</span>
        <svg width="7" height="9" viewBox="0 0 7 9">
          <path d="M1.500 0h4v6h-4zM0 6h7M3.500 6v3" fill="#777" stroke="#777" />
        </svg>
      </div>
      <div className="h-[31px] flex items-center pl-[5px] bg-linear-to-b from-white to-[#f3f3f5] border-b border-[#d8d9db]">
        <Slot w="w-[20px]">
          <S>
            <rect x="1" y="8" width="10" height="8" fill="#e0e0e0" stroke="#aaa" />
            <path d="M7 9l8-6M11 2h5v5" fill="none" stroke="#5a8ac8" strokeWidth="1.500" />
          </S>
        </Slot>
        <Sep c="mx-[6px]" />
        <Slot w="w-[20px]"><Tree badge /></Slot>
        <Sep c="ml-[6px] mr-[7px]" />
        <Slot w="w-[20px]">
          <S>
            <path d="M2 3h11M5 3v11h4M5 8h6M13 9v6M11 13l2 2 2-2" fill="none" stroke="#777" />
          </S>
        </Slot>
        <Slot w="w-[32px]">
          <S>
            <path d="M1 3h11M3 6h8M3 9h8M3 12h8M3 15h8" stroke="#222" strokeDasharray="1 1" />
            <path d="M14 15V2M12 5l2-3 2 3" fill="none" stroke="#0a2af0" strokeWidth="1.300" />
          </S>
        </Slot>
        <Sep c="mr-[4px]" />
        <Slot w="w-[20px]">
          <S>
            <path d="M9 2 16 9H12V16H6V9H2z" fill="#b5b5b5" />
          </S>
        </Slot>
        <Slot w="w-[32px]">
          <S>
            <path d="M9 16 16 9H12V2H6V9H2z" fill="#2f8fe0" stroke="#1e6ab0" strokeWidth=".6" />
          </S>
        </Slot>
        <Sep c="ml-[1px] mr-[4px]" />
        <Slot w="w-[38px]">
          <S w={15} h={15}>
            <rect x=".5" y=".5" width="14" height="14" fill="#fff" stroke="#445" />
            <path d="M2 3.500h7M2 6.500h7M2 9.500h7M2 12.500h7" stroke="#3a5a90" />
            <path d="M11 2v11" stroke="#444" strokeWidth="2" strokeDasharray="2 1" />
          </S>
          <Caret />
        </Slot>
      </div>
      <ScenarioTree />
      <div className="h-[2px] border-t border-[#9fa1a5]" />
      <div className="h-[6px] bg-[#f0f0f0] border-t border-[#c8c9cc]" />
      <div className={`h-[20px] bg-[#e3e4e8] border-t border-[#c8c9cc] flex items-center pl-[11px] text-[11.5px] font-bold text-[#666] ${arial}`}>Notes</div>
      <div className="h-[116px] bg-white flex justify-end border-b border-[#a8aaae]">
        <div className="w-[15px] bg-[#f5f5f5] flex flex-col items-center justify-between py-[5px]">
          <ScrollArrow d="M1 6 4.500 2.500 8 6" />
          <ScrollArrow d="M1 3 4.500 6.500 8 3" />
        </div>
      </div>
      <div className={`h-[30px] bg-[#f0f0f0] flex pl-[3px] text-[12px] ${ui}`}>
        <div className="w-[86px] h-[29px] pt-[2px] bg-white border-x border-b border-[#a8aaae] flex items-center justify-center gap-[3px] text-[#333]">
          <svg width="16" height="14" viewBox="0 0 16 14">
            <rect x="6" y="1" width="4" height="4" fill="#6a9ad8" />
            <path d="M8 5v3M2 10V8h12v2" fill="none" stroke="#777" />
            <rect x="0" y="10" width="4" height="4" fill="#5aa04a" />
            <rect x="6" y="10" width="4" height="4" fill="#5aa04a" />
            <rect x="12" y="10" width="4" height="4" fill="#2e7d32" />
          </svg>
          <span className="tracking-[-0.3px]">Scenario</span>
        </div>
        <div className="w-[91px] h-[27px] pt-[2px] bg-[#ececee] border-x border-b border-[#a8aaae] flex items-center justify-center gap-[4px] text-[#666]">
          <svg width="15" height="15" viewBox="0 0 15 15">
            <rect x=".5" y=".5" width="14" height="14" fill="#fff" stroke="#555" />
            <path d="M2 3.500h5M2 6.500h5M2 9.500h5M2 12.500h5M8 3.500h5M8 6.500h5M8 9.500h5M8 12.500h5" stroke="#333" />
          </svg>
          <span className="tracking-[-0.3px]">Properties</span>
        </div>
      </div>
    </div>
    <RightStatus />
  </div>
);

export default function App() {
  return (
    <div className={`w-[1455px] h-[902px] bg-white overflow-hidden pl-[7px] pr-[7px] ${ui}`}>
      <div className="w-[1441px] h-[893px] bg-[#f0f0f0] border border-[#77797c] border-b-[#5d5f62] flex flex-col shadow-[0_0_7px_rgba(0,0,0,0.45)]">
        <div className="h-[30px] bg-white flex items-center pl-[8px] shrink-0">
          <svg width="16" height="16" viewBox="0 0 16 16" className="shrink-0">
            <rect width="16" height="16" fill="#1f9e4d" />
            <path d="M7 6h9V2H7z" fill="#e8f5ec" />
            <path d="M1 13 5 4h2l2 9H7.500l-.5-2H4.500L3 13z" fill="#fff" />
          </svg>
          <span className="ml-[5px] text-[13px] text-[#222] tracking-[-0.1px]">AFT Arrow - Metric - Air Distribution - ANS Final.aro</span>
          <div className="flex-1" />
          <svg width="11" height="2" viewBox="0 0 11 2" className="mr-[34px]">
            <rect width="11" height="1" fill="#000" />
          </svg>
          <svg width="10" height="10" viewBox="0 0 10 10" className="mr-[36px]">
            <rect x=".5" y=".5" width="9" height="9" fill="none" stroke="#000" />
          </svg>
          <svg width="11" height="11" viewBox="0 0 11 11" className="mr-[17px]">
            <path d="M.5.5l10 10M10.500.5l-10 10" stroke="#000" />
          </svg>
        </div>
        <div className="h-[23px] bg-[#e9eaee] flex items-center pl-[8px] gap-[17px] text-[12px] text-[#222] shrink-0">
          {['文件', '编辑', '视图', '分析', '工具', '数据库', '整理', '窗口', '帮助'].map(m => (
            <span key={m}>{m}</span>
          ))}
        </div>
        <MainToolbar />
        <div className="flex-1 flex min-h-0">
          <div className="w-[3px] bg-linear-to-r from-[#5c646c] to-[#8f9499] shrink-0" />
          <div className="w-[1028px] shrink-0 flex flex-col">
            <Tabs />
            <WorkToolbar />
            <div className="flex-1 flex pl-[1px] pr-[6px] pt-[1px] pb-[1px] gap-[6px] min-h-0 bg-[#eeeef0]">
              <Toolbox />
              <Diagram />
            </div>
            <LeftStatus />
          </div>
          <div className="flex-1 pt-[6px] pl-[1px] flex min-w-0">
            <RightPanel />
          </div>
        </div>
      </div>
    </div>
  );
}
